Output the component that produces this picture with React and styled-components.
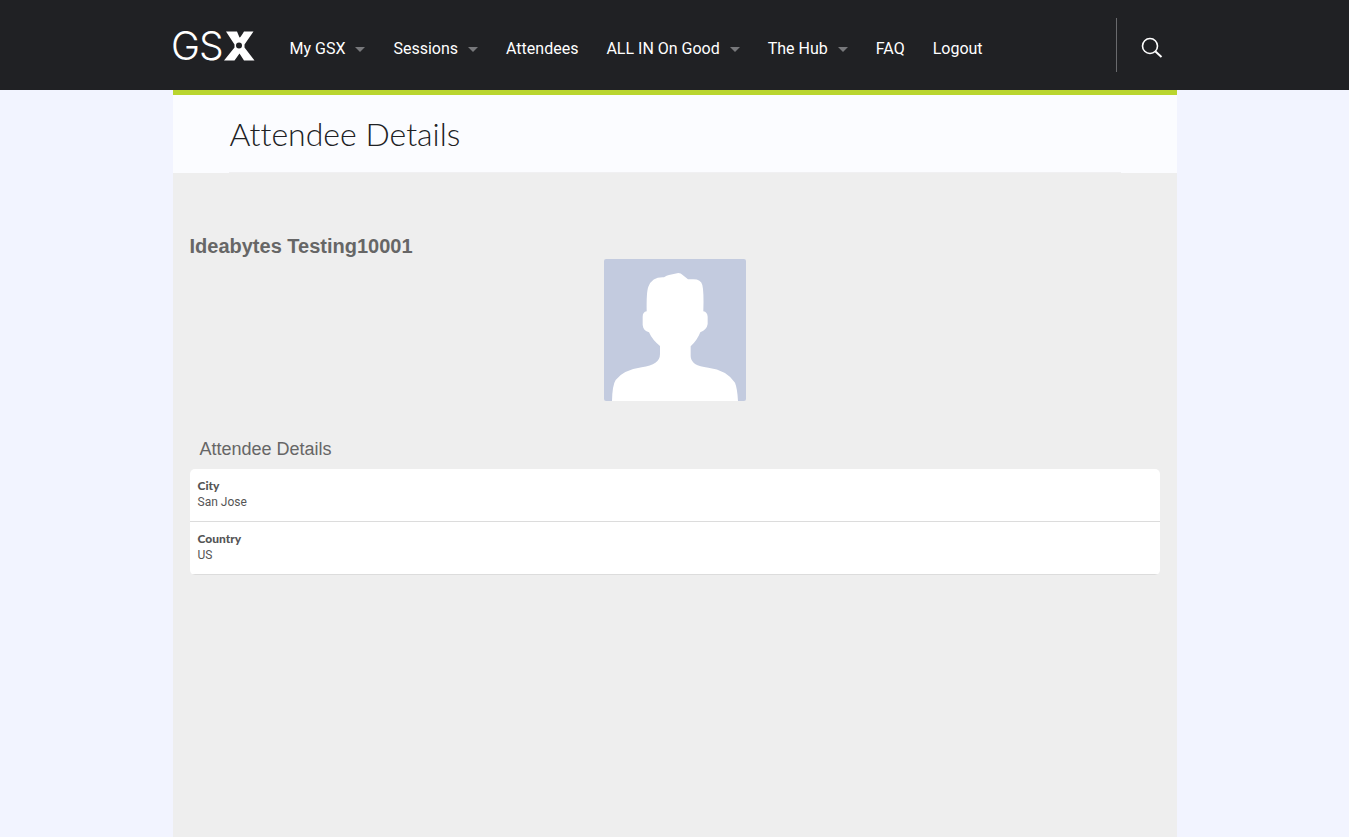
import React from "react";
import styled, { createGlobalStyle } from "styled-components";

const GlobalStyle = createGlobalStyle`
  *, *::before, *::after { box-sizing: border-box; }
  html, body, #root { height: 100%; }
  body {
    margin: 0;
    background: #f2f4ff;
    color: #666;
    font-family: Roboto, "Liberation Sans", sans-serif;
  }
`;

const Page = styled.div`
  min-height: 100%;
  display: flex;
  flex-direction: column;
`;

const TopBar = styled.header`
  background: #202124;
`;

const Container = styled.div`
  width: 100%;
  max-width: 1004px;
  margin: 0 auto;
`;

const BarInner = styled(Container)`
  height: 90px;
  display: flex;
  align-items: center;
`;

const LogoLink = styled.a`
  display: block;
  height: 60px;
  margin: 0 20px 0 -4px;
`;

const NavList = styled.ul`
  display: flex;
  flex: 1;
  list-style: none;
  margin: 0;
  padding: 8px 0 0;
`;

const NavItem = styled.li`
  padding: 0 14px;
`;

const NavLink = styled.a`
  display: flex;
  align-items: center;
  gap: 10px;
  color: #fff;
  font-size: 16px;
  line-height: 20px;
  text-decoration: none;
  white-space: nowrap;
`;

const Caret = styled.span`
  border: 5px solid transparent;
  border-top-color: #77787b;
  border-bottom: 0;
`;

const SearchArea = styled.div`
  height: 54px;
  padding: 6px 14px 0 24px;
  border-left: 1px solid #696a6d;
  display: flex;
  align-items: center;
`;

const SearchButton = styled.button`
  display: flex;
  padding: 0;
  border: 0;
  background: none;
  color: #fff;
  cursor: pointer;
`;

const Main = styled.main`
  width: 100%;
  max-width: 1004px;
  margin: 0 auto;
  flex: 1;
  border-top: 5px solid #b9d52f;
  background: #eee;
`;

const TitleBand = styled.div`
  padding: 0 56px;
  background: #fbfcff;
`;

const PageTitle = styled.h1`
  margin: 0;
  padding: 19px 1px 18px;
  border-bottom: 1px solid #f0f0f2;
  color: #202124;
  font-family: Lato, "Liberation Sans", sans-serif;
  font-weight: 300;
  font-size: 32px;
  line-height: 40px;
  font-variant-ligatures: none;
`;

const Content = styled.div`
  padding: 61px 17px 40px;
`;

const PersonName = styled.h2`
  margin: 0;
  font-family: "Liberation Sans", Arial, sans-serif;
  font-weight: 700;
  font-size: 20px;
  line-height: 25px;
`;

const Avatar = styled.svg`
  display: block;
  width: 142px;
  height: 142px;
  margin: 0 auto;
  border-radius: 2px;
`;

const SectionTitle = styled.h3`
  margin: 36px 0 8px;
  padding: 0 10px;
  font-family: "Liberation Sans", Arial, sans-serif;
  font-weight: 400;
  font-size: 18px;
  line-height: 24px;
`;

const Details = styled.dl`
  margin: 0;
  border-radius: 5px;
  overflow: hidden;
  background: #fff;
`;

const DetailRow = styled.div`
  padding: 9px 8px 11px;
  border-bottom: 1px solid #dcdcdc;
  font-size: 12px;
  line-height: 16px;
  color: #555;
`;

const DetailLabel = styled.dt`
  font-family: Lato, "Liberation Sans", sans-serif;
  font-weight: 900;
`;

const DetailValue = styled.dd`
  margin: 0;
`;

const navItems = [
  { label: "My GSX", menu: true },
  { label: "Sessions", menu: true },
  { label: "Attendees" },
  { label: "ALL IN On Good", menu: true },
  { label: "The Hub", menu: true },
  { label: "FAQ" },
  { label: "Logout" },
];

const details = [
  { label: "City", value: "San Jose" },
  { label: "Country", value: "US" },
];

function Logo() {
  return (
    <svg width="87" height="60" viewBox="-4 -15 87 60" fill="#fff" role="img" aria-label="GSX">
      <g fontFamily="Inter, sans-serif" fontWeight="300" fontSize="39">
        <text x="-2" y="30">G</text>
        <text x="26" y="30">S</text>
      </g>
      <path d="M53 1.500H64L66.500 7.500Q67.500 7.500 71 1.500H80.500L71.500 14.500V17.500L81.500 30.500H71L66.500 23.500L61.500 30.500H51L61.500 17.500V14.500Z" />
      <circle cx="66" cy="15.500" r="3" fill="#202124" />
    </svg>
  );
}

function AvatarPicture() {
  return (
    <Avatar viewBox="27 27 426 426" role="img" aria-label="Ideabytes Testing10001">
      <rect x="27" y="27" width="426" height="426" fill="#c3cbdf" />
      <path
        fill="#fff"
        d="M51 453Q52 405 62 390Q85 360 140 352Q195 345 195 312V288Q172 270 162 247Q145 243 143 225V200Q143 186 155 184Q154 125 160 110Q172 80 207 82Q215 76 222 75L250 69Q258 69 262 74L279 88H295Q318 88 322 105Q327 125 325 184Q337 186 338 200V222Q336 238 316 247Q306 272 287 289V318Q287 348 340 353Q395 360 420 398Q427 415 429 453Z"
      />
    </Avatar>
  );
}

export default function App() {
  return (
    <>
      <GlobalStyle />
      <Page>
        <TopBar>
          <BarInner>
            <LogoLink href="#home">
              <Logo />
            </LogoLink>
            <NavList aria-label="Main">
              {navItems.map(({ label, menu }) => (
                <NavItem key={label}>
                  <NavLink href="#">
                    {label}
                    {menu && <Caret />}
                  </NavLink>
                </NavItem>
              ))}
            </NavList>
            <SearchArea>
              <SearchButton type="button" aria-label="Search">
                <svg width="22" height="22" viewBox="0 0 22 22" fill="none" stroke="currentColor" strokeWidth="1.600">
                  <circle cx="9" cy="9" r="7.500" />
                  <path d="M14.500 14.500L20.500 20" strokeWidth="2" />
                </svg>
              </SearchButton>
            </SearchArea>
          </BarInner>
        </TopBar>
        <Main>
          <TitleBand>
            <PageTitle>Attendee Details</PageTitle>
          </TitleBand>
          <Content>
            <PersonName>Ideabytes Testing10001</PersonName>
            <AvatarPicture />
            <SectionTitle>Attendee Details</SectionTitle>
            <Details>
              {details.map(({ label, value }) => (
                <DetailRow key={label}>
                  <DetailLabel>{label}</DetailLabel>
                  <DetailValue>{value}</DetailValue>
                </DetailRow>
              ))}
            </Details>
          </Content>
        </Main>
      </Page>
    </>
  );
}
